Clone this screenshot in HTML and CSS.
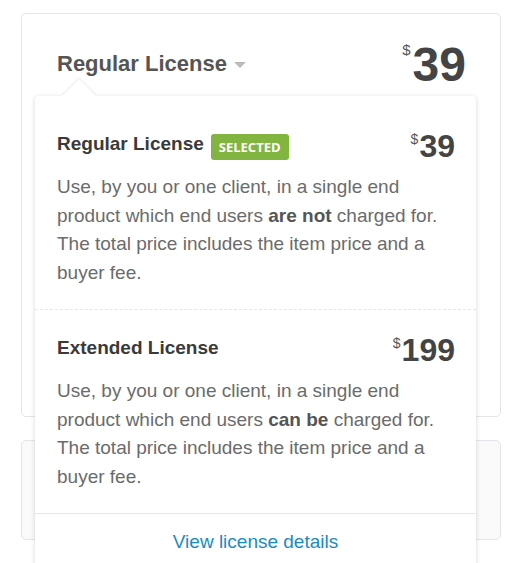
FILE: index.html
```html
<!DOCTYPE html>
<html lang="en">
<head>
<meta charset="utf-8">
<title>License</title>
<link rel="stylesheet" href="styles.css">
</head>
<body>
<div class="page">
  <div class="card">
    <div class="card-head">
      <div class="license-select">
        <span class="license-name">Regular License</span>
        <span class="caret"></span>
      </div>
      <div class="price big"><span class="cur">$</span><span class="amt">39</span></div>
    </div>

    <div class="popup">
      <div class="item">
        <div class="item-row">
          <div class="item-title"><span>Regular License</span><span class="badge">SELECTED</span></div>
          <div class="price small"><span class="cur">$</span><span class="amt">39</span></div>
        </div>
        <p class="desc">Use, by you or one client, in a single end product which end users <b>are not</b> charged for. The total price includes the item price and a buyer fee.</p>
      </div>
      <div class="item item-ext">
        <div class="item-row">
          <div class="item-title"><span>Extended License</span></div>
          <div class="price small"><span class="cur">$</span><span class="amt">199</span></div>
        </div>
        <p class="desc">Use, by you or one client, in a single end product which end users <b>can be</b> charged for. The total price includes the item price and a buyer fee.</p>
      </div>
      <div class="popup-foot"><a class="details-link" href="#">View license details</a></div>
    </div>
  </div>
  <div class="card card-muted"></div>
</div>
</body>
</html>
```

FILE: styles.css
```css
html, body {
  margin: 0;
  padding: 0;
  height: 563px;
  overflow: hidden;
  background: #fff;
  font-family: "Liberation Sans", Arial, sans-serif;
}

.page {
  padding: 13px 9px 0 21px;
}

.card {
  position: relative;
  box-sizing: border-box;
  height: 404px;
  border: 1px solid #e3e6e9;
  border-radius: 5px;
  background: #fff;
}

.card-muted {
  height: 100px;
  margin-top: 23px;
  background: #fafafa;
}

.card-head {
  display: flex;
  justify-content: space-between;
  align-items: flex-start;
  padding: 27px 34px 0 35px;
}

.license-select {
  display: flex;
  align-items: center;
  margin-top: 9px;
}

.license-name {
  font-size: 22px;
  line-height: 28px;
  font-weight: bold;
  color: #555;
}

.caret {
  width: 0;
  height: 0;
  margin-left: 7px;
  margin-top: 2px;
  border-left: 6px solid transparent;
  border-right: 6px solid transparent;
  border-top: 6px solid #bbb;
}

.price {
  display: flex;
  align-items: flex-start;
  color: #444;
  font-weight: bold;
}

.price .cur {
  font-weight: normal;
  color: #555;
}

.price.big .cur {
  font-size: 15px;
  line-height: 15px;
  margin-top: 1px;
  margin-right: 2px;
}

.price.big .amt {
  font-size: 48px;
  line-height: 48px;
}

.price.small .cur {
  font-size: 14px;
  line-height: 14px;
  margin-top: 2px;
  margin-right: 1px;
}

.price.small .amt {
  font-size: 32px;
  line-height: 32px;
}

/* dropdown popup */
.popup {
  position: absolute;
  top: 82px;
  left: 13px;
  width: 441px;
  padding-top: 9px;
  background: #fff;
  border-radius: 4px;
  box-shadow: 0 1px 5px rgba(0, 0, 0, 0.16);
  z-index: 5;
}

.popup::before {
  content: "";
  position: absolute;
  top: -12px;
  left: 32px;
  width: 24px;
  height: 24px;
  background: #fff;
  transform: rotate(45deg);
  box-shadow: -1px -1px 2px rgba(0, 0, 0, 0.08);
  z-index: -1;
}

.item {
  padding: 25px 21px 22px 22px;
}

.item-ext {
  border-top: 1px dashed #e6e6e6;
  padding-top: 24px;
}

.item-row {
  display: flex;
  justify-content: space-between;
  align-items: flex-start;
}

.item-title {
  display: flex;
  align-items: flex-start;
  margin-top: 2px;
  font-size: 19px;
  line-height: 24px;
  font-weight: bold;
  color: #3a3a3a;
}

.badge {
  margin-left: 7px;
  margin-top: 2px;
  padding: 0 8px;
  height: 26px;
  line-height: 26px;
  border-radius: 3px;
  background: #82b440;
  color: #fff;
  font-family: "Open Sans", "Liberation Sans", sans-serif;
  font-size: 13px;
  font-weight: bold;
}

.desc {
  margin: 11px 0 0;
  font-size: 19px;
  line-height: 28.5px;
  color: #6b6b6b;
}

.desc b {
  color: #555;
}

.popup-foot {
  border-top: 1px solid #e6e9ec;
  padding: 14px 0 16px;
  text-align: center;
  font-size: 19px;
  line-height: 28.5px;
}

.details-link {
  color: #1a8bc2;
  text-decoration: none;
}
```
